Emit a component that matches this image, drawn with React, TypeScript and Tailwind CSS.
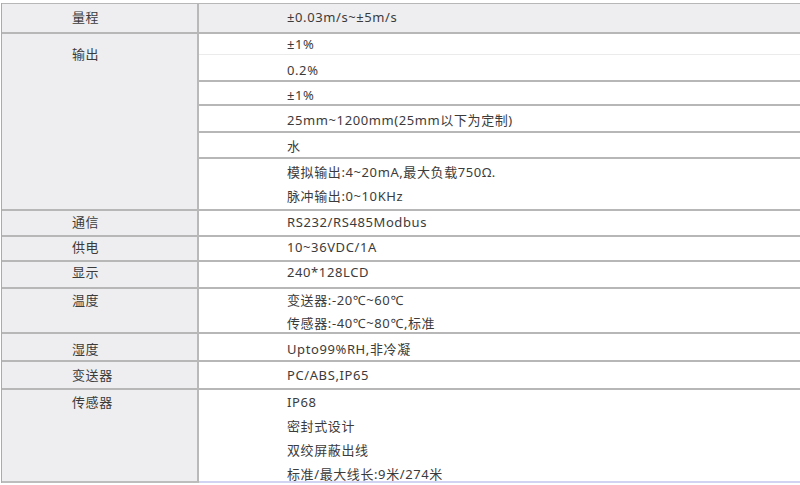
import React from 'react';

type Cell = { lines: string[]; cls: string };
type Group = { label: string; labelCls: string; rowCls: string; rightCls: string; leftCls: string; cells: Cell[] };

const LINE = 'border-[#b7b7b7]';

const GROUPS: Group[] = [
    {
        label: '输出',
        labelCls: 'pt-[10px] leading-[20px]',
        rowCls: '',
        leftCls: 'border-b-2 border-[#b7b7b7]',
        rightCls: 'border-b-2 border-[#b7b7b7]',
        cells: [
            { lines: ['±1%'], cls: 'h-[21px] leading-[20px] border-b border-[#ebebeb]' },
            { lines: ['0.2%'], cls: 'h-[27px] pt-[5px] leading-[20px] border-b-2 border-[#b7b7b7]' },
            { lines: ['±1%'], cls: 'h-[24px] pt-[3px] leading-[20px] border-b-2 border-[#b7b7b7]' },
            { lines: ['25mm~1200mm(25mm以下为定制)'], cls: 'h-[27px] pt-[4px] leading-[20px] border-b-2 border-[#b7b7b7]' },
            { lines: ['水'], cls: 'h-[26px] pt-[3px] leading-[20px] border-b-2 border-[#b7b7b7]' },
            { lines: ['模拟输出:4~20mA,最大负载750Ω.', '脉冲输出:0~10KHz'], cls: 'h-[50px] pt-[1px] leading-[24px]' },
        ],
    },
    {
        label: '通信',
        labelCls: 'pt-[1px] leading-[20px]',
        rowCls: 'h-[26px]',
        leftCls: 'border-b-2 border-[#b7b7b7]',
        rightCls: 'border-b-2 border-[#b7b7b7]',
        cells: [{ lines: ['RS232/RS485Modbus'], cls: 'pt-[1px] leading-[20px]' }],
    },
    {
        label: '供电',
        labelCls: 'leading-[20px]',
        rowCls: 'h-[25px]',
        leftCls: 'border-b-2 border-[#b7b7b7]',
        rightCls: 'border-b-2 border-[#b7b7b7]',
        cells: [{ lines: ['10~36VDC/1A'], cls: 'leading-[20px]' }],
    },
    {
        label: '显示',
        labelCls: 'leading-[20px]',
        rowCls: 'h-[27px]',
        leftCls: 'border-b-2 border-[#b7b7b7]',
        rightCls: 'border-b-2 border-[#b7b7b7]',
        cells: [{ lines: ['240*128LCD'], cls: 'leading-[20px]' }],
    },
    {
        label: '温度',
        labelCls: 'leading-[23px]',
        rowCls: 'h-[45px]',
        leftCls: 'border-b-2 border-[#b7b7b7]',
        rightCls: 'border-b-2 border-[#b7b7b7]',
        cells: [{ lines: ['变送器:-20℃~60℃', '传感器:-40℃~80℃,标准'], cls: 'leading-[23px]' }],
    },
    {
        label: '湿度',
        labelCls: 'pt-[5px] leading-[20px]',
        rowCls: 'h-[28px]',
        leftCls: 'border-b-2 border-[#b7b7b7]',
        rightCls: 'border-b-2 border-[#b7b7b7]',
        cells: [{ lines: ['Upto99%RH,非冷凝'], cls: 'pt-[5px] leading-[20px]' }],
    },
    {
        label: '变送器',
        labelCls: 'pt-[3px] leading-[20px]',
        rowCls: 'h-[28px]',
        leftCls: 'border-b-2 border-[#b7b7b7]',
        rightCls: 'border-b-2 border-[#b7b7b7]',
        cells: [{ lines: ['PC/ABS,IP65'], cls: 'pt-[3px] leading-[20px]' }],
    },
    {
        label: '传感器',
        labelCls: 'leading-[24px]',
        rowCls: 'h-[93px]',
        leftCls: 'border-b-2 border-[#bdbdbd]',
        rightCls: 'border-b-2 border-[#d2d2f2]',
        cells: [{ lines: ['IP68', '密封式设计', '双绞屏蔽出线', '标准/最大线长:9米/274米'], cls: 'leading-[24px]' }],
    },
];

const App: React.FC = () => (
    <div
        className="w-[800px] h-[485px] bg-white pt-[3px] text-[13px] tracking-[0.6px] text-[#3b3b3b]"
        style={{ fontFamily: '"Noto Sans", "Noto Sans CJK SC", sans-serif' }}
    >
        <div className="ml-[1px] border-l border-[#ababab]">
            {/* header row */}
            <div className={`flex h-[31px] border-t border-b-2 ${LINE} bg-[#eeeef0]`}>
                <div className="flex w-[197px] items-center border-r-2 border-[#b9b9b9] pl-[70px]">量程</div>
                <div className="flex flex-1 items-center pl-[88px]">±0.03m/s~±5m/s</div>
            </div>

            {GROUPS.map((g) => (
                <div key={g.label} className={`flex ${g.rowCls}`}>
                    <div className={`w-[197px] shrink-0 border-r-2 border-r-[#b9b9b9] bg-[#eeeef0] pl-[70px] ${g.leftCls}`}>
                        <div className={g.labelCls}>{g.label}</div>
                    </div>
                    <div className={`flex flex-1 flex-col ${g.rightCls}`}>
                        {g.cells.map((c, i) => (
                            <div key={i} className={`pl-[88px] ${c.cls}`}>
                                {c.lines.map((l) => (
                                    <div key={l}>{l}</div>
                                ))}
                            </div>
                        ))}
                    </div>
                </div>
            ))}
        </div>
    </div>
);

export default App;
